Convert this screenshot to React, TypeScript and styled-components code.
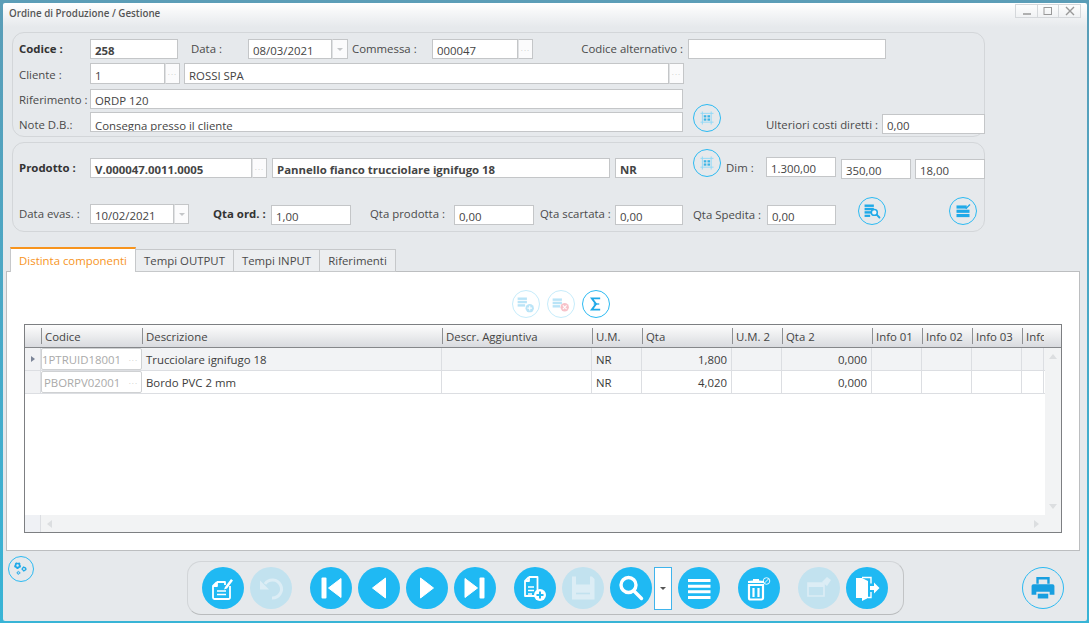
import {createGlobalStyle, styled} from 'styled-components';
import type {ReactNode} from 'react';

const GlobalStyle = createGlobalStyle`
    html, body {
        margin: 0;
        padding: 0;
        overflow: hidden;
    }
    * {
        box-sizing: border-box;
    }
`;

const Page = styled.div`
    width: 1089px;
    height: 623px;
    padding: 3px 2px 2px 3px;
    background: linear-gradient(180deg, #5b9db7, #38b4d6);
    font-family: 'Open Sans', 'Noto Sans', sans-serif;
    font-size: 11.4px;
    color: #444;
`;

const Window = styled.div`
    height: 618px;
    display: flex;
    flex-direction: column;
    border-radius: 2px;
    background: linear-gradient(180deg, #ffffff 0, #e6e9ec 24px);
`;

const TitleBar = styled.div`
    height: 29px;
    flex: none;
    display: flex;
    justify-content: space-between;
    align-items: flex-start;
    padding: 1px 6px 0 6px;
`;

const Title = styled.div`
    margin-top: 3px;
    font-size: 9.8px;
    font-weight: 600;
    color: #555;
`;

const WinControls = styled.div`
    display: flex;
    height: 14px;
    border: 1px solid #d5d8db;
`;

const WinButton = styled.div<{$w: number}>`
    width: ${({$w}) => $w}px;
    display: flex;
    align-items: center;
    justify-content: center;
    border-left: 1px solid #d5d8db;
    &:first-child {
        border-left: 0;
    }
`;

const Panel = styled.section<{$h: number; $mt?: number}>`
    width: 973px;
    height: ${({$h}) => $h}px;
    margin: ${({$mt}) => $mt ?? 0}px 0 0 9px;
    padding-left: 6px;
    border: 1px solid #d3d6d9;
    border-radius: 12px;
    flex: none;
`;

const Row = styled.div<{$mt?: number}>`
    display: flex;
    align-items: flex-start;
    margin-top: ${({$mt}) => $mt ?? 0}px;
`;

const Label = styled.div<{$w: number; $gap?: number; $top?: number; $bold?: boolean; $right?: boolean}>`
    flex: none;
    width: ${({$w}) => $w}px;
    margin-left: ${({$gap}) => $gap ?? 0}px;
    margin-top: ${({$top}) => $top ?? 0}px;
    height: 16px;
    line-height: 19px;
    white-space: nowrap;
    font-weight: ${({$bold}) => ($bold ? 700 : 400)};
    color: ${({$bold}) => ($bold ? '#333' : '#4a4a4a')};
    text-align: ${({$right}) => ($right ? 'right' : 'left')};
`;

const Field = styled.div<{$w: number; $h?: number; $gap?: number; $top?: number; $bold?: boolean; $clip?: boolean}>`
    flex: none;
    width: ${({$w}) => $w}px;
    height: ${({$h}) => $h ?? 20}px;
    margin-left: ${({$gap}) => $gap ?? 0}px;
    margin-top: ${({$top}) => $top ?? 0}px;
    padding: ${({$clip, $h}) => ($clip ? 4 : $h === 21 ? 3 : 2)}px 4px 0 4px;
    line-height: 18px;
    overflow: hidden;
    white-space: nowrap;
    background: #fff;
    border: 1px solid #c4c6c8;
    color: #444;
    font-weight: ${({$bold}) => ($bold ? 700 : 400)};
`;

const Addon = styled.div<{$w: number; $h?: number; $top?: number}>`
    flex: none;
    width: ${({$w}) => $w}px;
    height: ${({$h}) => $h ?? 20}px;
    margin-top: ${({$top}) => $top ?? 0}px;
    display: flex;
    align-items: center;
    justify-content: center;
    background: #fbfbfc;
    border: 1px solid #c4c6c8;
    border-left: 1px solid #e0e2e4;
    color: #c4c4c4;
    font-size: 8px;
    letter-spacing: 1px;
`;

const Caret = styled.span<{$color?: string}>`
    width: 0;
    height: 0;
    border-left: 3px solid transparent;
    border-right: 3px solid transparent;
    border-top: 3px solid ${({$color}) => $color ?? '#c4c6c8'};
`;

const RoundOutline = styled.div<{$size?: number; $gap?: number; $top?: number; $off?: boolean}>`
    flex: none;
    width: ${({$size}) => $size ?? 28}px;
    height: ${({$size}) => $size ?? 28}px;
    margin-left: ${({$gap}) => $gap ?? 0}px;
    margin-top: ${({$top}) => $top ?? 0}px;
    border: 1.5px solid ${({$off}) => ($off ? '#c6ecfb' : '#2cbaf2')};
    border-radius: 50%;
    background: ${({$off}) => ($off ? '#fff' : 'transparent')};
    svg {
        display: block;
        width: 100%;
        height: 100%;
        opacity: ${({$off}) => ($off ? 0.3 : 1)};
    }
`;

const TabBar = styled.div`
    display: flex;
    align-items: flex-end;
    height: 25px;
    margin: 15px 0 0 7px;
    flex: none;
    position: relative;
    z-index: 1;
`;

const Tab = styled.div<{$w: number; $active?: boolean}>`
    width: ${({$w}) => $w}px;
    height: ${({$active}) => ($active ? 25 : 23)}px;
    line-height: ${({$active}) => ($active ? 24 : 22)}px;
    text-align: center;
    white-space: nowrap;
    border: 1px solid #c6c8ca;
    border-left-width: ${({$active}) => ($active ? 1 : 0)}px;
    border-top: ${({$active}) => ($active ? '2px solid #f7941d' : '1px solid #c6c8ca')};
    border-bottom: ${({$active}) => ($active ? '0' : '1px solid #c6c8ca')};
    background: ${({$active}) => ($active ? '#fff' : '#eceef0')};
    color: ${({$active}) => ($active ? '#f7941d' : '#4a4a4a')};
`;

const TabPanel = styled.div`
    width: 1074px;
    height: 280px;
    margin: -1px 0 0 3px;
    flex: none;
    padding: 18px 0 0 17px;
    background: #fff;
    border: 1px solid #bcbec0;
`;

const ActionRow = styled.div`
    display: flex;
    gap: 7px;
    padding-left: 488px;
`;

const TableBox = styled.div`
    width: 1038px;
    height: 209px;
    margin-top: 6px;
    display: flex;
    flex-direction: column;
    border: 1px solid #7d7f82;
`;

const HeaderRow = styled.div`
    height: 23px;
    flex: none;
    display: flex;
    background: linear-gradient(180deg, #fdfdfd, #d9dbdf);
    border-bottom: 1px solid #85878a;
`;

const HeaderCell = styled.div<{$w: number}>`
    width: ${({$w}) => $w}px;
    flex: none;
    padding-left: 4px;
    line-height: 24px;
    white-space: nowrap;
    overflow: hidden;
    position: relative;
    &::before {
        content: '';
        position: absolute;
        left: 0;
        top: 3px;
        bottom: 3px;
        border-left: 1px solid #8e9093;
    }
`;

const CornerCell = styled.div`
    width: 16px;
    flex: none;
`;

const TableBody = styled.div`
    flex: 1;
    display: flex;
    min-height: 0;
`;

const RowsArea = styled.div`
    width: 1020px;
    flex: none;
`;

const DataRow = styled.div<{$odd?: boolean}>`
    height: 23px;
    display: flex;
    background: ${({$odd}) => ($odd ? '#f2f3f5' : '#fff')};
    border-bottom: 1px solid #dcdee2;
`;

const RowHead = styled.div`
    width: 16px;
    flex: none;
    display: flex;
    align-items: center;
    justify-content: center;
    background: #f1f2f4;
    border-right: 1px solid #dcdee2;
`;

const Pointer = styled.span`
    width: 0;
    height: 0;
    border-top: 3.5px solid transparent;
    border-bottom: 3.5px solid transparent;
    border-left: 4px solid #7b8497;
`;

const CodeCell = styled.div`
    width: 101px;
    flex: none;
    display: flex;
    justify-content: space-between;
    padding: 0 3px 0 2px;
    line-height: 21px;
    background: #fff;
    border: 1px solid #cfd1d3;
    border-radius: 2px;
    color: #aaa;
    overflow: hidden;
    white-space: nowrap;
`;

const Dots = styled.span`
    color: #c4c4c4;
    font-size: 8px;
    letter-spacing: 1px;
    background: #fff;
    padding-left: 2px;
`;

const Cell = styled.div<{$w: number; $right?: boolean}>`
    width: ${({$w}) => $w}px;
    flex: none;
    padding: 0 ${({$right}) => ($right ? 4 : 3)}px 0 4px;
    line-height: 23px;
    color: #3c3c3c;
    text-align: ${({$right}) => ($right ? 'right' : 'left')};
    border-right: 1px solid #dcdee2;
    white-space: nowrap;
`;

const VScroll = styled.div`
    flex: 1;
    display: flex;
    align-items: flex-start;
    justify-content: space-between;
    flex-direction: column;
    padding: 6px 0 6px 4px;
    background: #f2f3f4;
`;

const Arrow = styled.span<{$dir: 'up' | 'down' | 'left' | 'right'}>`
    width: 0;
    height: 0;
    ${({$dir}) => ($dir === 'up' || $dir === 'down'
        ? `border-left: 4px solid transparent; border-right: 4px solid transparent;`
        : `border-top: 4px solid transparent; border-bottom: 4px solid transparent;`)}
    ${({$dir}) => `border-${{up: 'bottom', down: 'top', left: 'right', right: 'left'}[$dir]}: 5px solid #dcdee0;`}
`;

const HScrollRow = styled.div`
    height: 17px;
    flex: none;
    display: flex;
`;

const HScrollCorner = styled.div`
    width: 16px;
    flex: none;
    background: #eff1f5;
    border-right: 1px solid #dcdee2;
`;

const HScroll = styled.div`
    flex: 1;
    display: flex;
    align-items: center;
    justify-content: space-between;
    padding: 0 22px 0 6px;
    background: #f2f3f4;
`;

const Footer = styled.div`
    display: flex;
    align-items: flex-start;
    margin-top: 5px;
    padding-left: 5px;
`;

const Toolbar = styled.div`
    width: 717px;
    height: 54px;
    flex: none;
    display: flex;
    align-items: flex-start;
    margin: 5px 0 0 153px;
    padding: 5px 0 0 14px;
    border: 1px solid #d2d5d8;
    border-bottom-color: #b9bbbd;
    border-right-color: #c2c4c6;
    border-radius: 14px;
`;

const ToolButton = styled.div<{$gap?: number; $off?: boolean}>`
    width: 42px;
    height: 42px;
    flex: none;
    margin-left: ${({$gap}) => $gap ?? 0}px;
    border-radius: 50%;
    background: ${({$off}) => ($off ? '#c2e2ef' : '#1fb9f3')};
    svg {
        display: block;
        width: 42px;
        height: 42px;
    }
`;

const DropButton = styled.div`
    width: 18px;
    height: 43px;
    flex: none;
    margin-left: 2px;
    display: flex;
    align-items: center;
    justify-content: center;
    background: #fff;
    border: 1px solid #3fb4ec;
`;

const Stack = ({x = 6, y = 8, color = '#1fa9e8'}: {x?: number; y?: number; color?: string}) => (
    <g fill={color}>
        <rect x={x} y={y} width="10" height="2.6" />
        <rect x={x} y={y + 3.6} width="10" height="2.6" />
        <rect x={x} y={y + 7.2} width="8" height="2.6" />
    </g>
);

const MarkIcon = () => (
    <svg viewBox="0 0 28 28">
        <g stroke="#8fd8f6" strokeWidth="1" fill="none">
            <path d="M7 9h14M7 18.5h14M9 7v14M18.5 7v14" />
        </g>
        <g fill="#3cb4e6">
            <rect x="10.5" y="11" width="2.8" height="2.4" />
            <rect x="14.5" y="11" width="2.8" height="2.4" />
            <rect x="10.5" y="14.5" width="2.8" height="2.4" />
            <rect x="14.5" y="14.5" width="2.8" height="2.4" />
        </g>
    </svg>
);

const DbSearchIcon = () => (
    <svg viewBox="0 0 28 28">
        <Stack x={6} y={7} />
        <rect x="6" y="18" width="6" height="2.4" fill="#1fa9e8" />
        <circle cx="16.5" cy="15.5" r="3.2" fill="#fff" fillOpacity="0.5" stroke="#1fa9e8" strokeWidth="1.6" />
        <path d="M19 18l3 3" stroke="#1fa9e8" strokeWidth="2" strokeLinecap="round" />
    </svg>
);

const DbEditIcon = () => (
    <svg viewBox="0 0 28 28">
        <g fill="#1fa9e8">
            <rect x="7" y="8" width="11" height="3.4" />
            <rect x="7" y="12.6" width="14" height="3.4" />
            <rect x="7" y="17.2" width="14" height="3.4" />
        </g>
        <path d="M17 11.5l4.500-4.500" stroke="#1fa9e8" strokeWidth="1.4" />
    </svg>
);

const DbAddIcon = () => (
    <svg viewBox="0 0 28 28">
        <Stack x={5} y={7} />
        <circle cx="18" cy="18.5" r="4.5" fill="#1fa9e8" />
        <path d="M18 16v5M15.5 18.5h5" stroke="#fff" strokeWidth="1.2" />
    </svg>
);

const DbRemoveIcon = () => (
    <svg viewBox="0 0 28 28">
        <Stack x={5} y={8} />
        <circle cx="18" cy="17.5" r="4.5" fill="#e8384f" />
        <path d="M16 15.5l4 4M20 15.5l-4 4" stroke="#fff" strokeWidth="1.2" />
    </svg>
);

const SigmaIcon = () => (
    <svg viewBox="0 0 28 28">
        <path d="M18.5 8H9.5l4.500 6-4.500 6h9" fill="none" stroke="#1fa9e8" strokeWidth="2" />
        <path d="M11.5 14h6" stroke="#1fa9e8" strokeWidth="1.4" />
    </svg>
);

const Gear = ({cx, cy, r}: {cx: number; cy: number; r: number}) => (
    <g fill="none" stroke="#1fa9e8">
        <circle cx={cx} cy={cy} r={r} strokeWidth={r * 0.8} />
        <circle cx={cx} cy={cy} r={r * 1.45} strokeWidth={r * 0.5} strokeDasharray={`${r * 0.9} ${r * 0.9}`} />
    </g>
);

const GearsIcon = () => (
    <svg viewBox="0 0 28 28">
        <Gear cx={10} cy={10} r={2.4} />
        <Gear cx={17.5} cy={14} r={1.8} />
        <Gear cx={11} cy={18.5} r={1.3} />
    </svg>
);

const EditDocIcon = () => (
    <svg viewBox="0 0 42 42">
        <path d="M15 15h8v3M15 15l-4 4v11.5a1.5 1.5 0 0 0 1.5 1.5h14a1.5 1.5 0 0 0 1.5-1.5V19M11 19h4v-4" fill="none" stroke="#fff" strokeWidth="1.8" strokeLinejoin="round" />
        <path d="M15 24h9M15 27.5h9" stroke="#fff" strokeWidth="1.5" />
        <path d="M23 20l6-8 2 1.6-6 8-3 1z" fill="#fff" />
    </svg>
);

const UndoIcon = () => (
    <svg viewBox="0 0 42 42">
        <path d="M15 17a9 9 0 1 1 7 14" fill="none" stroke="#dcedf5" strokeWidth="3" />
        <path d="M10 13.5v9h9z" fill="#dcedf5" />
    </svg>
);

const FirstIcon = () => (
    <svg viewBox="0 0 42 42">
        <rect x="11.5" y="10.5" width="5" height="21" rx="1" fill="#fff" />
        <path d="M31 11.5v19L18.5 21z" fill="#fff" stroke="#fff" strokeLinejoin="round" />
    </svg>
);

const PrevIcon = () => (
    <svg viewBox="0 0 42 42">
        <path d="M27.5 11v20L14.5 21z" fill="#fff" stroke="#fff" strokeLinejoin="round" />
    </svg>
);

const NextIcon = () => (
    <svg viewBox="0 0 42 42">
        <path d="M14.5 11v20L27.5 21z" fill="#fff" stroke="#fff" strokeLinejoin="round" />
    </svg>
);

const LastIcon = () => (
    <svg viewBox="0 0 42 42">
        <path d="M11 11.5v19L23.5 21z" fill="#fff" stroke="#fff" strokeLinejoin="round" />
        <rect x="25.5" y="10.5" width="5" height="21" rx="1" fill="#fff" />
    </svg>
);

const NewDocIcon = () => (
    <svg viewBox="0 0 42 42">
        <path d="M15 10h8.5v16M15 10l-4 4v15h10M11 14h4v-4" fill="none" stroke="#fff" strokeWidth="1.8" strokeLinejoin="round" />
        <path d="M14 20h6M14 23.5h6M14 27h4" stroke="#fff" strokeWidth="1.4" />
        <circle cx="26" cy="28" r="6" fill="#fff" />
        <path d="M26 24.5v7M22.5 28h7" stroke="#1fb9f3" strokeWidth="2" />
    </svg>
);

const SaveIcon = () => (
    <svg viewBox="0 0 42 42">
        <path d="M10 9.5h4v8h14v-8h2l2.5 2.5V32.5H10z" fill="#dcedf5" />
        <path d="M14 26.5h14" stroke="#c2e2ef" strokeWidth="1.6" />
    </svg>
);

const SearchIcon = () => (
    <svg viewBox="0 0 42 42">
        <circle cx="18.5" cy="18" r="7.5" fill="none" stroke="#fff" strokeWidth="3.4" />
        <path d="M24 24l7.5 7.5" stroke="#fff" strokeWidth="3.4" strokeLinecap="round" />
    </svg>
);

const ListIcon = () => (
    <svg viewBox="0 0 42 42">
        <path d="M10 13.5h22.5M10 19.2h22.5M10 24.8h22.5M10 30.5h22.5" stroke="#fff" strokeWidth="3" />
    </svg>
);

const TrashIcon = () => (
    <svg viewBox="0 0 42 42">
        <path d="M10 16h16v-2l-5-.5V12h-6v1.5l-5 .5z" fill="#fff" />
        <path d="M11 18h14v13a1.5 1.5 0 0 1-1.5 1.5h-11A1.5 1.5 0 0 1 11 31zM15.5 21v9M20.5 21v9" fill="none" stroke="#fff" strokeWidth="2.2" />
        <circle cx="28.5" cy="14" r="3.3" fill="none" stroke="#fff" strokeWidth="0.9" />
        <path d="M26.3 16.2l4.400-4.400" stroke="#fff" strokeWidth="0.9" />
    </svg>
);

const WindowTagIcon = () => (
    <svg viewBox="0 0 42 42">
        <path d="M10 16h16v13H10z" fill="none" stroke="#dcedf5" strokeWidth="1.6" />
        <path d="M10 16h16v4H10z" fill="#dcedf5" />
        <path d="M24 15l5-5 4 3-4 6z" fill="#dcedf5" />
    </svg>
);

const ExitIcon = () => (
    <svg viewBox="0 0 42 42">
        <path d="M10 11h6l6 3v17l-6 3v-3h-6z" fill="#fff" />
        <path d="M16 10.5h9v6M25 25v5.5h-3" fill="none" stroke="#fff" strokeWidth="1.4" />
        <path d="M24 19h4v-3.5l5.5 5.500-5.500 5.500V23h-4z" fill="#fff" />
    </svg>
);

const PrintIcon = () => (
    <svg viewBox="0 0 42 42">
        <path d="M14 9.5h14v7h-2.500v-4.500h-9v4.500H14z" fill="#189fe0" />
        <path d="M11 17h20a2 2 0 0 1 2 2v9h-5v-3H14v3H9v-9a2 2 0 0 1 2-2z" fill="#189fe0" />
        <rect x="15.5" y="27" width="11" height="5" fill="#189fe0" />
    </svg>
);

const columns = [
    {title: 'Codice', w: 101},
    {title: 'Descrizione', w: 300},
    {title: 'Descr. Aggiuntiva', w: 150},
    {title: 'U.M.', w: 50},
    {title: 'Qta', w: 90},
    {title: 'U.M. 2', w: 50},
    {title: 'Qta 2', w: 90},
    {title: 'Info 01', w: 50},
    {title: 'Info 02', w: 50},
    {title: 'Info 03', w: 50},
    {title: 'Info 04', w: 22},
];

const rows = [
    {code: '1PTRUID18001', desc: 'Trucciolare ignifugo 18', um: 'NR', qta: '1,800', qta2: '0,000', clip: true},
    {code: 'PBORPV02001', desc: 'Bordo PVC 2 mm', um: 'NR', qta: '4,020', qta2: '0,000', clip: false},
];

const CodeText = styled.span<{$clip?: boolean}>`
    margin-left: ${({$clip}) => ($clip ? -2 : 0)}px;
`;

function DotsAddon({w, h, top}: {w: number; h?: number; top?: number}): ReactNode {
    return <Addon $w={w} $h={h} $top={top}>···</Addon>;
}

export default function App() {
    return (
        <Page>
            <GlobalStyle />
            <Window>
                <TitleBar>
                    <Title>Ordine di Produzione / Gestione</Title>
                    <WinControls>
                        <WinButton $w={21}>
                            <svg width="10" height="10"><path d="M1 8h8" stroke="#999" strokeWidth="1.5" /></svg>
                        </WinButton>
                        <WinButton $w={21}>
                            <svg width="10" height="10"><rect x="1" y="1.5" width="7.5" height="7" fill="none" stroke="#999" /></svg>
                        </WinButton>
                        <WinButton $w={22}>
                            <svg width="10" height="10"><path d="M1 1l8 8M9 1L1 9" stroke="#999" strokeWidth="1.4" /></svg>
                        </WinButton>
                    </WinControls>
                </TitleBar>

                <Panel $h={105}>
                    <Row $mt={6}>
                        <Label $w={71} $bold>Codice :</Label>
                        <Field $w={88} $bold>258</Field>
                        <Label $w={57} $gap={13}>Data :</Label>
                        <Field $w={84}>08/03/2021</Field>
                        <Addon $w={16}><Caret /></Addon>
                        <Label $w={80} $gap={4}>Commessa :</Label>
                        <Field $w={86}>000047</Field>
                        <DotsAddon w={15} />
                        <Label $w={150} $right>Codice alternativo :</Label>
                        <Field $w={198} $gap={5} />
                    </Row>
                    <Row $mt={4}>
                        <Label $w={71} $top={2}>Cliente :</Label>
                        <Field $w={75} $h={21}>1</Field>
                        <DotsAddon w={15} h={21} />
                        <Field $w={485} $h={21} $gap={4}>ROSSI SPA</Field>
                        <DotsAddon w={15} h={21} />
                    </Row>
                    <Row $mt={5}>
                        <Label $w={71} $top={1}>Riferimento :</Label>
                        <Field $w={593}>ORDP 120</Field>
                    </Row>
                    <Row $mt={3}>
                        <Label $w={71} $top={3}>Note D.B.:</Label>
                        <Field $w={593} $clip>Consegna presso il cliente</Field>
                        <RoundOutline $gap={10} $top={-8}><MarkIcon /></RoundOutline>
                        <Label $w={116} $gap={45} $top={3}>Ulteriori costi diretti :</Label>
                        <Field $w={103} $top={2} $gap={0}>0,00</Field>
                    </Row>
                </Panel>

                <Panel $h={90} $mt={5}>
                    <Row $mt={6}>
                        <Label $w={71} $top={9} $bold>Prodotto :</Label>
                        <Field $w={162} $top={9} $bold>V.000047.0011.0005</Field>
                        <DotsAddon w={15} top={9} />
                        <Field $w={338} $top={9} $gap={5} $bold>Pannello fianco trucciolare ignifugo 18</Field>
                        <Field $w={68} $top={9} $gap={5} $bold>NR</Field>
                        <RoundOutline $gap={10}><MarkIcon /></RoundOutline>
                        <Label $w={40} $gap={5} $top={9}>Dim :</Label>
                        <Field $w={70} $top={8}>1.300,00</Field>
                        <Field $w={70} $top={10} $gap={5}>350,00</Field>
                        <Field $w={70} $top={10} $gap={4}>18,00</Field>
                    </Row>
                    <Row $mt={18}>
                        <Label $w={71} $top={7}>Data evas. :</Label>
                        <Field $w={84} $top={7}>10/02/2021</Field>
                        <Addon $w={15} $top={7}><Caret /></Addon>
                        <Label $w={58} $gap={24} $top={7} $bold>Qta ord. :</Label>
                        <Field $w={80} $top={8}>1,00</Field>
                        <Label $w={84} $gap={19} $top={7}>Qta prodotta :</Label>
                        <Field $w={80} $top={8}>0,00</Field>
                        <Label $w={75} $gap={6} $top={7}>Qta scartata :</Label>
                        <Field $w={68} $top={8}>0,00</Field>
                        <Label $w={74} $gap={10} $top={8}>Qta Spedita :</Label>
                        <Field $w={69} $top={8}>0,00</Field>
                        <RoundOutline $gap={22}><DbSearchIcon /></RoundOutline>
                        <RoundOutline $gap={63}><DbEditIcon /></RoundOutline>
                    </Row>
                </Panel>

                <TabBar>
                    <Tab $w={126} $active>Distinta componenti</Tab>
                    <Tab $w={98}>Tempi OUTPUT</Tab>
                    <Tab $w={86}>Tempi INPUT</Tab>
                    <Tab $w={76}>Riferimenti</Tab>
                </TabBar>

                <TabPanel>
                    <ActionRow>
                        <RoundOutline $off><DbAddIcon /></RoundOutline>
                        <RoundOutline $off><DbRemoveIcon /></RoundOutline>
                        <RoundOutline><SigmaIcon /></RoundOutline>
                    </ActionRow>
                    <TableBox>
                        <HeaderRow>
                            <CornerCell />
                            {columns.map((column) => (
                                <HeaderCell key={column.title} $w={column.w}>{column.title}</HeaderCell>
                            ))}
                        </HeaderRow>
                        <TableBody>
                            <RowsArea>
                                {rows.map((row, index) => (
                                    <DataRow key={row.code} $odd={index === 0}>
                                        <RowHead>{index === 0 && <Pointer />}</RowHead>
                                        <CodeCell>
                                            <CodeText $clip={row.clip}>{row.code}</CodeText>
                                            <Dots>···</Dots>
                                        </CodeCell>
                                        <Cell $w={300}>{row.desc}</Cell>
                                        <Cell $w={150} />
                                        <Cell $w={50}>{row.um}</Cell>
                                        <Cell $w={90} $right>{row.qta}</Cell>
                                        <Cell $w={50} />
                                        <Cell $w={90} $right>{row.qta2}</Cell>
                                        <Cell $w={50} />
                                        <Cell $w={50} />
                                        <Cell $w={50} />
                                        <Cell $w={22} />
                                    </DataRow>
                                ))}
                            </RowsArea>
                            <VScroll>
                                <Arrow $dir="up" />
                                <Arrow $dir="down" />
                            </VScroll>
                        </TableBody>
                        <HScrollRow>
                            <HScrollCorner />
                            <HScroll>
                                <Arrow $dir="left" />
                                <Arrow $dir="right" />
                            </HScroll>
                        </HScrollRow>
                    </TableBox>
                </TabPanel>

                <Footer>
                    <RoundOutline $size={26}><GearsIcon /></RoundOutline>
                    <Toolbar>
                        <ToolButton><EditDocIcon /></ToolButton>
                        <ToolButton $gap={6} $off><UndoIcon /></ToolButton>
                        <ToolButton $gap={18}><FirstIcon /></ToolButton>
                        <ToolButton $gap={6}><PrevIcon /></ToolButton>
                        <ToolButton $gap={6}><NextIcon /></ToolButton>
                        <ToolButton $gap={6}><LastIcon /></ToolButton>
                        <ToolButton $gap={18}><NewDocIcon /></ToolButton>
                        <ToolButton $gap={6} $off><SaveIcon /></ToolButton>
                        <ToolButton $gap={6}><SearchIcon /></ToolButton>
                        <DropButton><Caret $color="#555" /></DropButton>
                        <ToolButton $gap={6}><ListIcon /></ToolButton>
                        <ToolButton $gap={18}><TrashIcon /></ToolButton>
                        <ToolButton $gap={18} $off><WindowTagIcon /></ToolButton>
                        <ToolButton $gap={6}><ExitIcon /></ToolButton>
                    </Toolbar>
                    <RoundOutline $size={42} $gap={118} $top={11}><PrintIcon /></RoundOutline>
                </Footer>
            </Window>
        </Page>
    );
}
